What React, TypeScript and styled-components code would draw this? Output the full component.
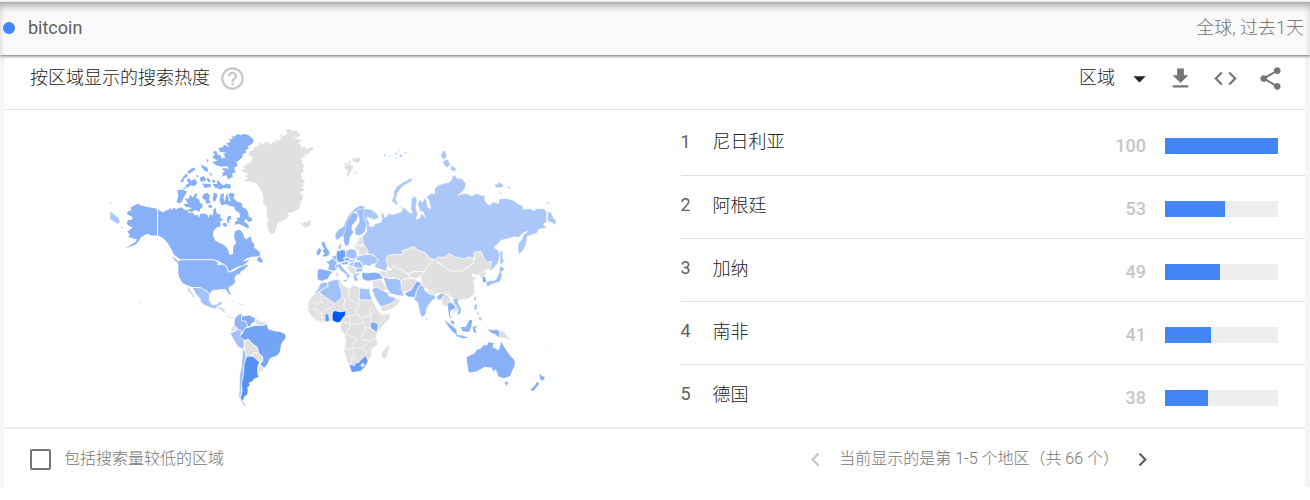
import React from "react";
import styled, { createGlobalStyle } from "styled-components";

const GlobalStyle = createGlobalStyle`
  * { box-sizing: border-box; }
  body {
    margin: 0;
    background: #ffffff;
    color: #212121;
    font-family: Roboto, "Noto Sans CJK SC", sans-serif;
    font-size: 18px;
    line-height: 24px;
  }
`;

const Page = styled.div`
  padding-top: 2px;
`;

const TermBar = styled.header`
  position: relative;
  display: flex;
  align-items: center;
  gap: 13px;
  height: 53px;
  padding: 0 6px 2px 3px;
  background: #fafafa;
  box-shadow: inset 0 6px 8px -3px rgba(0, 0, 0, 0.4), 0 1px 3px rgba(0, 0, 0, 0.6);
`;

const Dot = styled.span`
  width: 12px;
  height: 12px;
  border-radius: 50%;
  background: #4285f4;
`;

const Term = styled.span`
  color: #616161;
`;

const Scope = styled.span`
  margin-left: auto;
  color: #757575;
  font-weight: 300;
`;

const Surface = styled.main`
  padding: 0 5px 0 4px;
  background: #f5f5f5;
`;

const Card = styled.section`
  background: #ffffff;
`;

const CardHeader = styled.div`
  display: flex;
  align-items: center;
  height: 55px;
  padding: 0 12px 8px 26px;
  border-bottom: 1px solid #e4e4e4;
`;

const Title = styled.h2`
  margin: 0;
  font-size: 18px;
  font-weight: 300;
`;

const IconButton = styled.button<{ $pad: number; $tone: string }>`
  display: flex;
  padding: ${(p) => p.$pad}px;
  border: 0;
  background: none;
  color: ${(p) => p.$tone};
`;

const Glyph = styled.svg`
  display: block;
  width: 27px;
  height: 27px;
  fill: currentColor;
`;

const Tools = styled.div`
  display: flex;
  align-items: center;
  margin-left: auto;
`;

const SelectBox = styled.div`
  display: grid;
  align-items: center;
  width: 74px;
  margin-right: 5px;

  & > * { grid-area: 1 / 1; }
  & > svg { justify-self: end; pointer-events: none; }
`;

const Select = styled.select`
  width: 100%;
  padding: 0;
  border: 0;
  appearance: none;
  background: none;
  color: inherit;
  font: inherit;
  font-weight: 300;
`;

const CardBody = styled.div`
  display: flex;
  border-bottom: 2px solid #ececec;
`;

const MapPane = styled.div`
  flex: 0 0 52%;
  padding: 10px 120px 0 96px;
`;

const MapDrawing = styled.svg`
  display: block;
  width: 100%;
  stroke: #ffffff;
  stroke-linejoin: round;
`;

const RegionList = styled.div`
  flex: 1;
  padding-top: 2px;
`;

const RegionTable = styled.table`
  width: 100%;
  height: 315px;
  border-collapse: collapse;
`;

const Row = styled.tr`
  height: 63px;
  & + & { border-top: 1px solid #e0e0e0; }
`;

const RankCell = styled.td`
  width: 32px;
  padding: 0 0 3px;
  color: #616161;
`;

const NameCell = styled.td`
  padding: 0 0 2px;
  font-weight: 300;
`;

const ValueCell = styled.td`
  width: 60px;
  padding: 5px 0 0;
  text-align: right;
  color: #c6c6c6;
  font-weight: 500;
`;

const BarCell = styled.td`
  width: 159px;
  padding: 5px 27px 0 19px;
`;

const Track = styled.div`
  height: 16px;
  background: #eeeeee;
`;

const Fill = styled.div`
  height: 100%;
  background: #4285f4;
`;

const CardFooter = styled.footer`
  display: flex;
  align-items: center;
  justify-content: space-between;
  height: 58px;
  padding: 2px 149px 0 26px;
  color: #757575;
  font-size: 16px;
  font-weight: 300;
`;

const CheckLabel = styled.label`
  display: flex;
  align-items: center;
  gap: 13px;
`;

const Checkbox = styled.input`
  appearance: none;
  width: 21px;
  height: 21px;
  margin: 0;
  border: 2px solid #757575;
  border-radius: 2px;
`;

const Pager = styled.nav`
  display: flex;
  align-items: center;
  gap: 10px;
`;

const icons = {
  help: "M11 18h2v-2h-2v2zm1-16C6.48 2 2 6.48 2 12s4.48 10 10 10 10-4.48 10-10S17.52 2 12 2zm0 18c-4.41 0-8-3.59-8-8s3.59-8 8-8 8 3.59 8 8-3.59 8-8 8zm0-14c-2.21 0-4 1.79-4 4h2c0-1.1.9-2 2-2s2 .9 2 2c0 2-3 1.75-3 5h2c0-2.25 3-2.5 3-5 0-2.21-1.79-4-4-4z",
  arrow: "M6.5 10l5.5 5.5 5.5-5.5z",
  download: "M19 9h-4V3H9v6H5l7 7 7-7zM5 18v2h14v-2H5z",
  code: "M9.4 16.6L4.8 12l4.6-4.6L8 6l-6 6 6 6 1.4-1.4zm5.2 0l4.6-4.6-4.6-4.6L16 6l6 6-6 6-1.4-1.4z",
  share: "M18 16.08c-.76 0-1.44.3-1.96.77L8.91 12.7c.05-.23.09-.46.09-.7s-.04-.47-.09-.7l7.05-4.11c.54.5 1.25.81 2.04.81 1.66 0 3-1.34 3-3s-1.34-3-3-3-3 1.34-3 3c0 .24.04.47.09.7L8.04 9.81C7.5 9.31 6.79 9 6 9c-1.66 0-3 1.34-3 3s1.34 3 3 3c.79 0 1.5-.31 2.04-.81l7.12 4.16c-.05.21-.08.43-.08.65 0 1.61 1.31 2.92 2.92 2.92s2.92-1.31 2.92-2.92-1.31-2.92-2.92-2.92z",
  prev: "M15.41 7.41L14 6l-6 6 6 6 1.41-1.41L10.83 12z",
  next: "M10 6L8.59 7.41 13.17 12l-4.58 4.59L10 18l6-6z",
};

function Icon({ name }: { name: keyof typeof icons }) {
  return (
    <Glyph viewBox="0 0 24 24" aria-hidden="true">
      <path d={icons[name]} />
    </Glyph>
  );
}

type Land = { tone: string; d: string };

const GREY = "#e0e0e0";
const SOFT = "#abc7f9";
const LIGHT = "#a1c1f9";
const MID = "#87b0f7";

const northAmerica: Land[] = [
  { tone: MID, d: "M115 250L122 256L140 260L171 266V346L155 346L142 341L132 345L122 352L117 362L108 372L90 380L76 385L104 367L112 358L98 354L84 350L90 345L82 334L98 322L84 316L80 308L84 300L98 298L96 290L80 282L84 274L94 270L92 262L102 256Z" },
  { tone: MID, d: "M174 268L190 277L196 271L206 270L210 264L215 270L222 262L228 268L236 264L246 262L252 269L262 270L266 278L278 277L284 286L294 284L296 295L300 282L312 280L322 284L325 294L330 282L338 286L340 268L346 262L350 280L362 284L360 294L370 298L360 304L362 318L350 322L340 332L338 345L346 362L370 374L382 385L388 404L398 402L400 378L408 368L402 352L404 335L412 330L420 330L430 342L432 352L440 358L446 352L452 348L454 364L462 370L462 382L480 398L478 408L455 410L440 414L426 426L442 420L448 418L440 427L428 436L412 440L396 449L386 455L380 438L362 426L350 420L338 417H242L236 414L222 404L214 388L204 370L190 354L174 346Z" },
  { tone: MID, d: "M394 48L402 50L412 42L422 46L430 42L444 44L452 52L460 58L459 68L450 76L442 78L446 84L434 92L440 96L426 104L428 110L415 122L409 126L412 138L402 142L404 152L408 156L396 160L398 170L384 178L378 165L366 170L368 158L376 152L366 150L370 144L388 146L380 138L362 140L345 134L336 126L352 122L336 112L344 104L338 96L348 92L354 106L362 106L364 116L376 112L370 102L380 98L360 96L354 84L368 82L372 74L388 82L378 70L392 66L386 58L398 58Z" },
  { tone: MID, d: "M352 178L360 188L370 196L378 190L392 194L391 206L372 204L362 208L345 203L338 192L350 192ZM338 178L346 182L342 190L336 184Z" },
  { tone: MID, d: "M232 210L246 208L260 214L256 224L250 232L246 244L238 250L229 246L234 230Z" },
  { tone: MID, d: "M254 236L266 236L270 224L278 232L286 220L292 222L288 234L298 238L298 246L308 254L306 264L300 266L298 276L288 270L272 276L262 270L276 264L256 260L250 252L264 250Z" },
  { tone: MID, d: "M240 186L250 170L258 160L264 168L252 176L250 186ZM262 156L272 146L284 142L286 148L276 156L266 162ZM260 180L266 174L274 182L284 176L292 188L284 198L270 196L262 204L254 196L266 190ZM250 200L258 204L250 208ZM302 130L310 138L322 142L324 156L314 152L306 144ZM288 164L296 168L290 172ZM300 172L312 168L318 180L308 186L300 182ZM322 172L332 182L328 188L320 180ZM306 190L330 192L334 200L314 204ZM320 116L326 122L320 128ZM328 158L336 162L332 168Z" },
  { tone: MID, d: "M310 222L322 218L330 228L326 238L332 248L320 252L314 240L306 234ZM340 218L350 220L352 228L344 246L338 240ZM322 256L334 254L336 264L326 262Z" },
  { tone: MID, d: "M362 222L372 220L370 232L374 246L378 222L384 228L386 242L392 244L384 222L394 218L404 222L400 234L412 246L424 248L428 262L438 266L444 278L446 290L454 294L456 302L446 306L436 296L432 304L442 312L448 322L440 324L428 316L416 312L406 314L404 304L414 302L408 294L420 292L418 278L406 272L402 260L390 258L376 252L364 256L358 242ZM382 290L392 286L394 296L386 300L388 310L380 306ZM366 310L378 308L382 318L372 320Z" },
  { tone: MID, d: "M470 418L478 408L488 422L486 428L474 424ZM215 408L226 416L238 428L228 424Z" },
  { tone: "#a9c7fa", d: "M32 274L44 284L54 292L60 304L52 312L42 304L30 296ZM30 246L36 248L34 252ZM64 318L70 322L66 326Z" },
  { tone: GREY, d: "M555 30L566 27L580 34L588 30L592 38L602 42L592 52L574 54L594 56L606 62L594 70L604 76L600 84L614 80L618 88L636 80L640 90L628 96L624 102L612 104L616 112L604 112L606 130L612 138L606 146L612 154L602 160L606 176L615 184L606 192L612 198L602 200L614 212L598 216L610 230L600 250L598 266L584 272L580 276L560 278L566 286L560 296L548 300L532 312L524 338L512 343L504 330L500 308L506 300L500 288L500 262L488 246L490 232L484 214L470 190L448 184L430 182L444 174L434 168L446 162L422 152L434 146L424 138L440 138L436 130L450 130L458 112L446 108L446 96L460 90L462 82L478 76L474 66L488 72L500 64L514 74L516 66L530 68L522 58L536 62L544 52L534 42L550 48L562 40Z" },
  { tone: GREY, d: "M603 308L610 310L612 304L620 306L628 300L634 308L628 318L614 322L606 316Z" },
];

const americas: Land[] = [
  { tone: "#8cb3f8", d: "M240 29H340L355 36L352 44L372 42L380 52L384 66L396 64L410 56L425 48L440 42L445 46L430 60L420 66L424 70L408 76L404 84L406 92L404 100L396 106L386 112L387 120L392 130L389 137L382 126L376 118L360 118L350 120L338 120L328 132L318 120L308 118L300 112L276 112L260 106L245 98L236 80L233 66L234 50L232 36Z" },
  { tone: LIGHT, d: "M275 112H300L318 122L328 132L327 150L336 164L348 164L356 156L366 154L364 162L352 168L345 176L330 172L312 164L302 156L300 146L286 130L282 122Z" },
  { tone: LIGHT, d: "M259 106L268 116L276 128L285 143L278 140L270 126L264 122Z" },
  { tone: GREY, d: "M348 174L358 166L374 178L378 192L370 188L358 178Z" },
  { tone: SOFT, d: "M376 190L388 200L402 202L398 206L384 202Z" },
  { tone: GREY, d: "M382 146L398 150L410 157L396 154ZM416 158L432 162L426 166L414 164Z" },
  { tone: "#8fb5f8", d: "M404 204L416 192L426 190L424 208L440 216L442 228L434 236L428 248L412 236L401 230Z" },
  { tone: "#82adf6", d: "M424 196L430 198L446 194L466 204L464 216L454 220L450 230L442 228L438 214L424 210Z" },
  { tone: GREY, d: "M466 204L480 212L498 216L496 226L472 226L464 216Z" },
  { tone: GREY, d: "M392 232L402 226L410 232L406 240L394 248Z" },
  { tone: LIGHT, d: "M390 250L406 242L412 236L426 242L420 256L432 268L432 290L428 298L412 288L400 268Z" },
  { tone: "#74a4f5", d: "M418 258L428 248L434 234L450 230L464 226L472 226L486 226L496 224L500 220L504 236L524 242L540 244L556 252L557 264L544 280L540 304L532 316L510 324L502 342L492 354L479 342L488 332L486 318L474 310L472 292L456 280L446 268L432 270Z" },
  { tone: GREY, d: "M432 272L446 268L456 280L472 292L474 306L460 308L456 318L440 318L434 300Z" },
  { tone: GREY, d: "M460 308L474 306L488 320L487 332L476 334L458 318Z" },
  { tone: GREY, d: "M474 344L484 346L491 356L486 366L474 364Z" },
  { tone: LIGHT, d: "M428 298L434 300L438 318L432 350L430 380L424 410L422 440L430 456L444 470L430 464L416 440L418 412L418 376L424 350Z" },
  { tone: "#5591f3", d: "M440 318L458 318L478 336L472 352L473 372L477 380L462 386L456 394L446 398L450 404L442 412L444 420L442 432L432 440L430 453L421 444L426 420L424 400L430 374L432 340Z" },
  { tone: LIGHT, d: "M117 158L122 158L122 163L118 162Z" },
];

const northEurasia: Land[] = [
  { tone: SOFT, d: "M190 266L212 268L230 282L236 292L222 299L208 292L198 292L208 310L206 318L218 320L226 310L240 308L246 298L242 282L250 280L252 292L262 288L262 280L276 284L296 278L304 276L308 262L318 268L324 276L336 280L332 264L334 236L344 228L350 240L346 262L352 282L346 298L358 294L364 280L374 292L370 276L358 272L352 250L358 240L368 246L372 234L378 242L382 262L392 266L386 240L378 232L392 220L404 222L402 208L410 198L424 192L444 188L454 180L456 170L464 164L468 174L484 176L496 190L494 204L484 216L470 228L484 222L500 220L512 228L530 220L540 226L552 226L554 244L566 256L580 246L594 250L598 236L620 236L640 242L656 254L666 256L668 268L688 266L700 272L708 266L730 266L738 274L738 306L728 312L738 322L714 328L710 338L694 344L680 348L676 374L668 390L656 403L652 386L654 370L664 358L670 344L684 332L668 338L654 352L640 350L628 354L602 360L580 382L592 390L598 402L592 430L572 450L566 446L572 430L558 426L548 412L542 394L524 396L522 412L490 416L462 410L445 404L430 412L404 420L388 414L372 396L352 390L342 380L328 384L306 392L306 404L284 402L262 410L258 424L264 432L258 446L262 456L238 446L222 440L234 420L220 404L206 402L196 388L190 372L186 350L196 340L200 330L198 312L190 290Z" },
  { tone: SOFT, d: "M742 274L752 278L758 292L766 302L764 314L752 306L741 304ZM736 250L743 245L748 250Z" },
  { tone: SOFT, d: "M290 256L284 250L274 242L282 226L280 216L290 200L306 188L322 180L334 174L335 182L310 196L298 208L290 224L286 238L292 252ZM298 256L308 264L300 262Z" },
  { tone: SOFT, d: "M422 104L426 94L434 92L439 106L434 118L424 114ZM428 122L442 118L450 134L440 142L430 134ZM450 146L456 134L460 142L468 144L464 154L450 150Z" },
  { tone: SOFT, d: "M582 190L590 194L596 186L610 196L606 202L586 202ZM618 198L632 202L626 206ZM596 216L605 222L598 223Z" },
  { tone: SOFT, d: "M248 104L256 102L254 110ZM262 108L272 106L270 112ZM280 100L292 98L288 104ZM298 104L308 102L304 110L298 112ZM310 98L322 96L316 102ZM292 88L300 92L294 94ZM286 114L292 112L290 118Z" },
  { tone: GREY, d: "M126 124L132 130L138 126L142 136L146 122L152 124L150 138L160 136L156 150L148 160L147 173L138 164L142 152L130 144L136 138ZM152 118L162 114L178 112L182 118L174 130L162 126ZM162 148L168 158L172 162L164 164Z" },
  { tone: "#9dbff9", d: "M106 354L105 340L118 326L130 320L134 308L144 288L154 276L166 264L180 256L194 260L192 268L178 266L168 274L158 276L148 292L138 304L136 326L130 346L122 350L112 360Z" },
  { tone: "#93b8f8", d: "M158 276L174 284L168 302L156 314L154 328L160 336L150 350L146 372L136 380L130 362L130 344L136 326L138 304L148 292Z" },
  { tone: "#9dbff9", d: "M168 274L178 268L190 266L190 290L198 314L194 336L178 347L164 342L164 326L174 312L178 300L174 284Z" },
  { tone: GREY, d: "M172 354L186 352L190 372L180 376L164 372L174 364ZM162 376L180 376L182 384L174 390L164 386Z" },
  { tone: GREY, d: "M174 390L184 378L192 374L204 392L196 405L176 403Z" },
];

const africaEurope: Land[] = [
  { tone: MID, d: "M64 38L70 28L70 36L76 36L76 46L88 64L88 74L78 80L64 80L72 70L66 62L72 56L66 50ZM48 66L56 52L64 58L60 74L50 76Z" },
  { tone: "#9dbff9", d: "M114 50L122 38L124 46L120 58L114 58Z" },
  { tone: "#6fa2f5", d: "M110 62L120 62L124 58L135 60L137 80L130 84L136 94L112 97L106 80Z" },
  { tone: LIGHT, d: "M137 62L154 56L168 60L171 80L162 88L137 81Z" },
  { tone: "#93b8f8", d: "M94 80L108 74L108 84L112 94L98 86Z" },
  { tone: "#96baf8", d: "M76 94L86 92L96 84L112 96L106 106L112 118L98 123L82 118L86 104Z" },
  { tone: MID, d: "M52 118L62 116L98 124L88 136L84 146L66 153L51 148Z" },
  { tone: LIGHT, d: "M106 104L122 100L126 110L138 124L150 136L143 150L138 134L122 122L114 112L106 114ZM128 148L142 148L138 156L128 152ZM108 128L114 128L114 140L108 140Z" },
  { tone: "#8fb5f8", d: "M130 84L142 82L152 86L144 94L134 93ZM120 97L144 94L144 103L128 104Z" },
  { tone: LIGHT, d: "M146 90L166 88L164 94L148 98ZM146 100L164 94L158 108L146 108Z" },
  { tone: LIGHT, d: "M164 94L180 94L190 112L180 116L164 112L158 106Z" },
  { tone: SOFT, d: "M171 78L190 74L208 72L220 76L234 90L228 100L212 104L206 110L196 104L188 108L182 94L166 90Z" },
  { tone: GREY, d: "M138 106L158 108L166 114L168 128L158 136L146 122Z" },
  { tone: LIGHT, d: "M166 114L188 114L186 124L168 126ZM158 134L178 126L178 132L168 138L174 148L168 156L160 146Z" },
  { tone: "#86aff7", d: "M184 132L188 126L200 128L224 126L242 130L248 146L222 150L202 153L186 147Z" },
  { tone: GREY, d: "M238 120L262 126L268 142L250 142L240 134Z" },
  { tone: GREY, d: "M216 152L244 148L254 168L262 178L248 182L228 170L218 176Z" },
  { tone: LIGHT, d: "M214 178L228 170L246 180L262 188L266 198L286 202L288 212L268 222L246 230L240 228L226 206Z" },
  { tone: GREY, d: "M240 230L268 222L282 214L288 202L301 210L290 226L270 238L246 245Z" },
  { tone: LIGHT, d: "M248 140L256 142L268 146L286 144L302 150L304 170L311 198L288 195L270 190L258 172Z" },
  { tone: GREY, d: "M62 158L78 156L100 150L122 148L122 156L128 166L150 174L158 164L178 172L208 176L214 178L208 184L216 208L226 230L238 246L244 254L270 249L268 264L250 284L236 300L228 316L232 342L214 356L212 380L202 390L196 406L180 423L154 427L148 404L140 392L131 360L137 330L132 312L120 296L122 278L112 274L98 272L86 272L64 276L48 270L34 258L22 240L26 212L44 190L56 174Z" },
  { tone: LIGHT, d: "M58 164L68 156L80 156L84 168L62 180L48 190L42 190L54 176Z" },
  { tone: LIGHT, d: "M82 156L100 149L117 149L116 164L123 180L124 202L104 220L58 188L62 180L84 168Z" },
  { tone: LIGHT, d: "M178 173L192 176L208 176L208 186L216 209H178Z" },
  { tone: "#0057e7", d: "M96 250L102 241L120 245L137 242L135 255L125 267L119 276L108 277L96 270Z" },
  { tone: "#5e97f4", d: "M74 252L85 250L88 272L75 276Z" },
  { tone: "#7eaaf6", d: "M210 278L220 275L234 282L232 294L230 307L211 294Z" },
  { tone: "#689df4", d: "M147 404L156 402L160 408L166 398L176 396L184 386L196 376L203 390L202 396L194 410L180 423L154 427Z" },
  { tone: GREY, d: "M183 402L189 399L193 405L187 410L182 407Z" },
  { tone: GREY, d: "M246 362L254 356L264 340L267 352L258 382L248 386L243 376Z" },
];

const africaBorders =
  "M60 188L66 218L34 218M104 220L92 234L74 238L66 250M124 200L134 206L130 236M146 174L146 206L176 222M176 208V224L166 240L172 254M26 238L50 236L52 250L66 250V274M136 260L150 256L172 254L184 262L210 256L222 238M216 226L206 242L210 258L212 278M122 278L148 276L150 262M148 276L150 292L134 312M150 282L196 278L194 304L182 318L192 330M134 312L166 322L168 334L160 338V356L134 356M196 290L212 294M190 330L206 332L230 322M166 354L186 354L206 336M160 358V380M154 402V384L164 384L172 390M186 354L200 368L196 376M174 256L190 276M234 250L254 266L236 284M52 256L64 260";

const asiaPacific: Land[] = [
  { tone: GREY, d: "M-44 88L-38 76L-18 72L6 74L6 62L28 54L42 50L52 60L72 66L88 84L104 88L96 100L74 124L60 126L42 124L24 132L6 120L-8 116L-20 106L-28 120L-38 104Z" },
  { tone: GREY, d: "M-44 120L-28 120L-20 106L-8 116L6 120L22 134L36 142L12 146L2 152L-16 142L-36 144Z" },
  { tone: GREY, d: "M22 134L42 124L74 124L62 136L50 146L34 144Z" },
  { tone: GREY, d: "M2 152L14 146L48 146L50 154L38 168L32 178L14 186L4 180Z" },
  { tone: "#8ab2f8", d: "M12 190L34 178L40 166L50 152L64 160L56 170L48 184L44 202L22 200Z" },
  { tone: LIGHT, d: "M56 170L62 162L72 172L74 182L90 192L106 196L104 206L92 214L80 232L76 252L66 262L58 248L52 216L40 208L46 198L48 184ZM108 200L120 190L134 186L136 192L124 208L112 210ZM76 260L83 266L78 270Z" },
  { tone: GREY, d: "M74 176L108 188L106 195L90 192Z" },
  { tone: GREY, d: "M104 88L112 98L126 106L150 122L186 122L218 100L222 82L220 66L242 64L250 84L258 96L274 94L270 114L258 118L240 130L232 136L216 132L216 140L232 142L218 152L224 172L222 190L208 204L180 210L164 206L150 200L136 188L108 190L82 178L68 168L60 138L74 124L76 114Z" },
  { tone: GREY, d: "M104 90L112 80L130 82L146 70L164 80L190 86L206 80L220 84L220 98L204 108L186 122L150 122L126 106Z" },
  { tone: GREY, d: "M122 208L134 190L146 198L152 210L146 220L144 238L140 228L128 226Z" },
];

const pacificIslands: Land[] = [
  { tone: "#86aff7", d: "M143 222L150 216L164 228L162 236L150 240L148 254L156 266L146 258L144 240Z" },
  { tone: LIGHT, d: "M158 206L174 206L172 216L182 236L180 250L170 256L174 240L162 218Z" },
  { tone: GREY, d: "M152 212L160 214L172 232L170 244L160 244L166 230Z" },
  { tone: GREY, d: "M236 132L258 122L252 140L242 142Z" },
  { tone: MID, d: "M246 142L254 140L258 154L248 158Z" },
  { tone: LIGHT, d: "M256 158L270 152L282 152L290 144L294 132L302 124L304 138L298 154L286 158L272 162L262 170ZM296 124L300 108L312 116L304 124Z" },
  { tone: SOFT, d: "M300 60L306 66L306 84L310 92L304 104L299 98Z" },
  { tone: LIGHT, d: "M220 208L226 198L228 206L222 212ZM222 224L230 224L228 240L222 236ZM234 262L244 262L240 272ZM230 244L236 252L232 256Z" },
  { tone: "#8cb3f8", d: "M132 270L146 280L168 298L170 314L156 304L142 286ZM150 270L160 272L162 284L154 280ZM166 314L186 316L204 322L190 324L168 318ZM181 290L196 290L208 268L216 270L212 290L206 305L186 303ZM216 290L232 286L224 294L228 308L220 306ZM262 296L276 300L288 298L297 304L296 322L284 312L270 306Z" },
  { tone: GREY, d: "M297 300L312 306L318 316L332 330L316 324L296 321Z" },
  { tone: MID, d: "M199 380L222 370L230 358L240 356L250 344L260 346L264 336L280 338L276 350L294 360L298 352L302 333L308 346L316 358L328 376L342 390L343 404L334 424L328 438L308 444L294 438L290 426L284 418L278 424L274 412L252 410L228 424L208 427L204 422L200 396Z" },
  { tone: MID, d: "M312 454L324 456L318 467ZM416 430L426 438L434 440L426 452L420 448ZM410 454L416 460L402 478L396 483L390 478L404 464Z" },
  { tone: "#f0f0f0", d: "M334 308L348 316L338 312ZM360 316L374 322L364 320ZM430 354L438 354L434 360Z" },
];

function Lands({ items, x, y, line }: { items: Land[]; x: number; y: number; line: number }) {
  return (
    <g transform={`translate(${x} ${y})`} strokeWidth={line}>
      {items.map((land) => (
        <path key={land.d} d={land.d} fill={land.tone} />
      ))}
    </g>
  );
}

function WorldMap() {
  return (
    <MapDrawing viewBox="0 0 1380 885" role="img" aria-label="bitcoin">
      <Lands items={northAmerica} x={0} y={0} line={0} />
      <Lands items={americas} x={0} y={390} line={2} />
      <Lands items={northEurasia} x={600} y={0} line={1} />
      <Lands items={africaEurope} x={600} y={330} line={2} />
      <path d={africaBorders} transform="translate(600 330)" fill="none" strokeWidth={2} />
      <Lands items={asiaPacific} x={900} y={330} line={2} />
      <Lands items={pacificIslands} x={900} y={330} line={0} />
    </MapDrawing>
  );
}

const regions = [
  { name: "尼日利亚", value: 100 },
  { name: "阿根廷", value: 53 },
  { name: "加纳", value: 49 },
  { name: "南非", value: 41 },
  { name: "德国", value: 38 },
];

export default function App() {
  return (
    <Page>
      <GlobalStyle />
      <TermBar>
        <Dot />
        <Term>bitcoin</Term>
        <Scope>全球, 过去1天</Scope>
      </TermBar>
      <Surface>
        <Card>
          <CardHeader>
            <Title>按区域显示的搜索热度</Title>
            <IconButton type="button" aria-label="帮助" $pad={9} $tone="#c6c6c6">
              <Icon name="help" />
            </IconButton>
            <Tools>
              <SelectBox>
                <Select aria-label="区域" defaultValue="region">
                  <option value="region">区域</option>
                </Select>
                <Icon name="arrow" />
              </SelectBox>
              <IconButton type="button" aria-label="下载" $pad={9} $tone="#757575">
                <Icon name="download" />
              </IconButton>
              <IconButton type="button" aria-label="嵌入" $pad={9} $tone="#757575">
                <Icon name="code" />
              </IconButton>
              <IconButton type="button" aria-label="分享" $pad={9} $tone="#757575">
                <Icon name="share" />
              </IconButton>
            </Tools>
          </CardHeader>
          <CardBody>
            <MapPane>
              <WorldMap />
            </MapPane>
            <RegionList>
              <RegionTable>
                <tbody>
                  {regions.map((region, index) => (
                    <Row key={region.name}>
                      <RankCell>{index + 1}</RankCell>
                      <NameCell>{region.name}</NameCell>
                      <ValueCell>{region.value}</ValueCell>
                      <BarCell>
                        <Track>
                          <Fill style={{ width: `${region.value}%` }} />
                        </Track>
                      </BarCell>
                    </Row>
                  ))}
                </tbody>
              </RegionTable>
            </RegionList>
          </CardBody>
          <CardFooter>
            <CheckLabel>
              <Checkbox type="checkbox" />
              包括搜索量较低的区域
            </CheckLabel>
            <Pager>
              <IconButton type="button" aria-label="上一页" disabled $pad={0} $tone="#c6c6c6">
                <Icon name="prev" />
              </IconButton>
              <span>当前显示的是第 1-5 个地区（共 66 个）</span>
              <IconButton type="button" aria-label="下一页" $pad={0} $tone="#616161">
                <Icon name="next" />
              </IconButton>
            </Pager>
          </CardFooter>
        </Card>
      </Surface>
    </Page>
  );
}
